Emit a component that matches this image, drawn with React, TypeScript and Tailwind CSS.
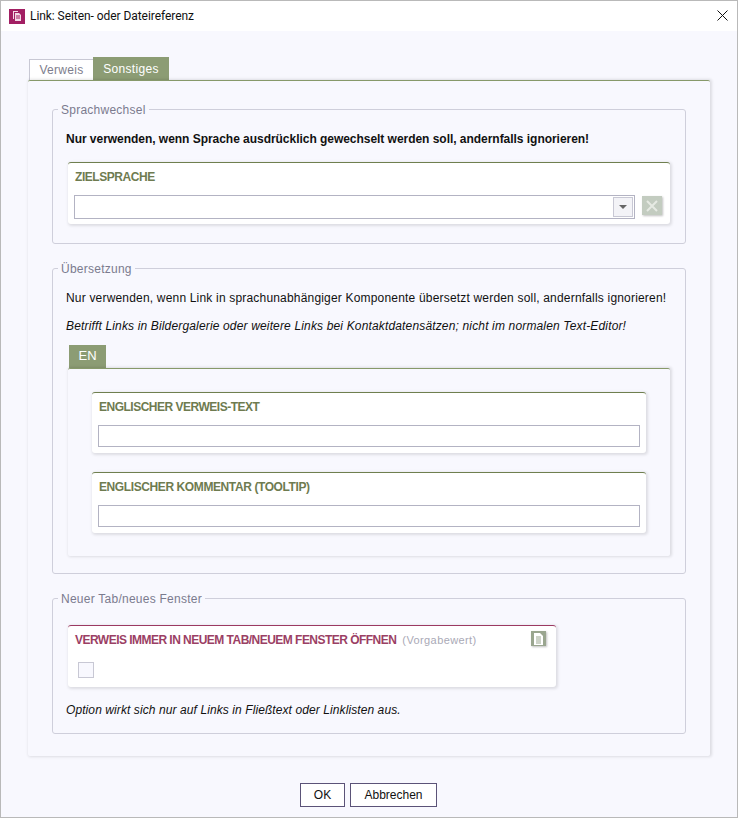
function Card({label,children,className="",color="olive"}:{label:React.ReactNode;children:React.ReactNode;className?:string;color?:string}){
  return (
    <div className={`bg-white rounded-[3px] border-t ${color==="olive"?"border-[#6f7f4f]":"border-[#9c3a62]"} shadow-[1px_1px_3px_1px_rgba(0,0,0,0.11)] ${className}`}>
      {label}
      {children}
    </div>
  );
}
function Title({children,className=""}:{children:React.ReactNode;className?:string}){
  return <div className={`text-[12px] leading-[14px] font-bold text-[#6e7b50] ${className}`}>{children}</div>;
}
function Field({title,className}:{title:string;className:string}){
  return (
    <Card label={<div className="pt-[7px] pl-[7px]"><Title className={className}>{title}</Title></div>} className="h-[61px] mx-[24px]">
      <div className="mt-[11px] mx-[6px] h-[22px] border border-[#b3b3c3] bg-white" />
    </Card>
  );
}
function Legend({children}:{children:React.ReactNode}){
  return <legend className="ml-[5px] px-[3px] h-[14px] text-[12px] tracking-[0.25px] leading-[17px] text-[#7b7b8e]">{children}</legend>;
}
export default function App(){
  return (
    <div className="w-[738px] h-[818px] bg-[#f8f8fe] border border-[#b9b9b9] font-['Liberation_Sans',sans-serif] text-[12px] overflow-hidden flex flex-col">
      <div className="h-[30px] bg-white flex items-center pl-[8px] pr-[6px] shrink-0">
        <div className="w-[16px] h-[15px] bg-[#a21f63] flex items-center justify-center">
          <svg width="12" height="12" viewBox="0 0 12 12" fill="none"><path d="M2 1h5v1H3v7H2z" fill="#f3d9e6"/><path d="M4 3h4l2 2v6H4z" fill="#f3d9e6"/><path d="M5 6h4M5 8h4" stroke="#a21f63"/></svg>
        </div>
        <span className="ml-[5px] font-['Roboto',sans-serif] text-[12px] tracking-[-0.06px] text-[#111] leading-none">Link: Seiten- oder Dateireferenz</span>
        <svg className="ml-auto mr-[3px] mb-[2px]" width="11" height="11" viewBox="0 0 11 11" fill="none"><path d="M0.5 0.5l10 10M10.5 0.5l-10 10" stroke="#111"/></svg>
      </div>
      <div className="flex-1 px-[27px] pt-[26px] flex flex-col">
        <div className="flex items-end h-[23px] shrink-0">
          <div className="w-[64px] h-[21px] bg-white border-l border-t border-[#c8c8d4] text-[#7d7d8c] flex items-center justify-center tracking-[0.3px] ml-[1px]">Verweis</div>
          <div className="w-[76px] h-[23px] bg-[#8c9c74] text-white flex items-start pt-[3px] justify-center tracking-[0.3px]">Sonstiges</div>
        </div>
        <div className="w-[682px] h-[676px] rounded-[2px] border-t border-[#87996a] shadow-[1px_0_3px_1px_rgba(0,0,0,0.11)] px-[24px] pt-[21px]">
          <fieldset className="h-[142px] border border-[#cfcfdb] rounded-[3px]">
            <Legend>Sprachwechsel</Legend>
            <p className="mt-[16px] ml-[13px] font-bold tracking-[-0.035px] text-[#111] leading-[14px]">Nur verwenden, wenn Sprache ausdrücklich gewechselt werden soll, andernfalls ignorieren!</p>
            <Card label={<div className="pt-[7px] pl-[7px]"><Title className="tracking-[-0.45px]">ZIELSPRACHE</Title></div>} className="mx-[15px] mt-[16px] h-[62px]">
              <div className="mt-[11px] ml-[6px] mr-[8px] flex items-start gap-[7px]">
                <div className="flex-1 h-[24px] border border-[#b3b3c3] flex justify-end items-center pr-[1px]">
                  <div className="w-[20px] h-[20px] bg-[#f3f3f7] border border-[#c8c8d4] flex items-center justify-center">
                    <svg width="10" height="6" viewBox="0 0 10 6"><path d="M1 1h8L5 5z" fill="#666"/></svg>
                  </div>
                </div>
                <div className="mt-[1px] w-[20px] h-[19px] bg-[#c3ccc0] shadow-[1px_1px_2px_rgba(0,0,0,0.25)] flex items-center justify-center">
                  <svg width="12" height="12" viewBox="0 0 12 12"><path d="M1 1l10 10M11 1L1 11" stroke="#e6eae3" strokeWidth="2"/></svg>
                </div>
              </div>
            </Card>
          </fieldset>
          <fieldset className="mt-[17px] h-[313px] border border-[#cfcfdb] rounded-[3px]">
            <Legend>Übersetzung</Legend>
            <p className="mt-[16px] ml-[13px] tracking-[0.185px] text-[#111] leading-[14px]">Nur verwenden, wenn Link in sprachunabhängiger Komponente übersetzt werden soll, andernfalls ignorieren!</p>
            <p className="mt-[14px] ml-[13px] italic tracking-[0.155px] text-[#111] leading-[14px]">Betrifft Links in Bildergalerie oder weitere Links bei Kontaktdatensätzen; nicht im normalen Text-Editor!</p>
            <div className="mt-[12px] ml-[16px] w-[37px] h-[23px] bg-[#8c9c74] text-white text-[13px] pb-[1px] flex items-center justify-center">EN</div>
            <div className="mx-[15px] h-[188px] border-t border-[#87996a] rounded-[2px] shadow-[1px_0_3px_1px_rgba(0,0,0,0.11)] pt-[23px]">
              <Field title="ENGLISCHER VERWEIS-TEXT" className="tracking-[-0.5px]" />
              <div className="h-[19px]" />
              <Field title="ENGLISCHER KOMMENTAR (TOOLTIP)" className="tracking-[-0.4px]" />
            </div>
          </fieldset>
          <fieldset className="mt-[17px] h-[143px] border border-[#cfcfdb] rounded-[3px]">
            <Legend>Neuer Tab/neues Fenster</Legend>
            <Card color="red" label={
              <div className="pt-[7px] pl-[7px] pr-[10px] flex items-start">
                <span className="text-[12px] tracking-[-0.53px] leading-[14px] font-bold text-[#9b3f64]">VERWEIS IMMER IN NEUEM TAB/NEUEM FENSTER ÖFFNEN</span>
                <span className="ml-[6px] text-[11px] tracking-[0.4px] leading-[14px] text-[#a9a9b6]">(Vorgabewert)</span>
                <div className="ml-auto -mt-[2px] w-[15px] h-[15px] bg-[#9aa68f] shadow-[1px_1px_2px_rgba(0,0,0,0.25)] flex items-center justify-center">
                  <svg width="9" height="12" viewBox="0 0 9 12"><path d="M0 0h6l3 3v9H0z" fill="#fff"/><path d="M2 4h5M2 6h5M2 8h5M2 10h5" stroke="#9aa68f"/></svg>
                </div>
              </div>
            } className="ml-[15px] mt-[20px] w-[488px] h-[62px]">
              <div className="mt-[15px] ml-[10px] w-[16px] h-[16px] border border-[#c8c8d4] bg-[#f8f8fe]" />
            </Card>
            <p className="mt-[16px] ml-[13px] italic tracking-[0.09px] text-[#111] leading-[14px]">Option wirkt sich nur auf Links in Fließtext oder Linklisten aus.</p>
          </fieldset>
        </div>
        <div className="mt-[27px] flex justify-center gap-[5px] pr-[1px]">
          <button className="w-[45px] h-[24px] border border-[#5b5378] bg-white text-[#111]">OK</button>
          <button className="w-[87px] h-[24px] border border-[#5b5378] bg-white text-[#111]">Abbrechen</button>
        </div>
      </div>
    </div>
  );
}
